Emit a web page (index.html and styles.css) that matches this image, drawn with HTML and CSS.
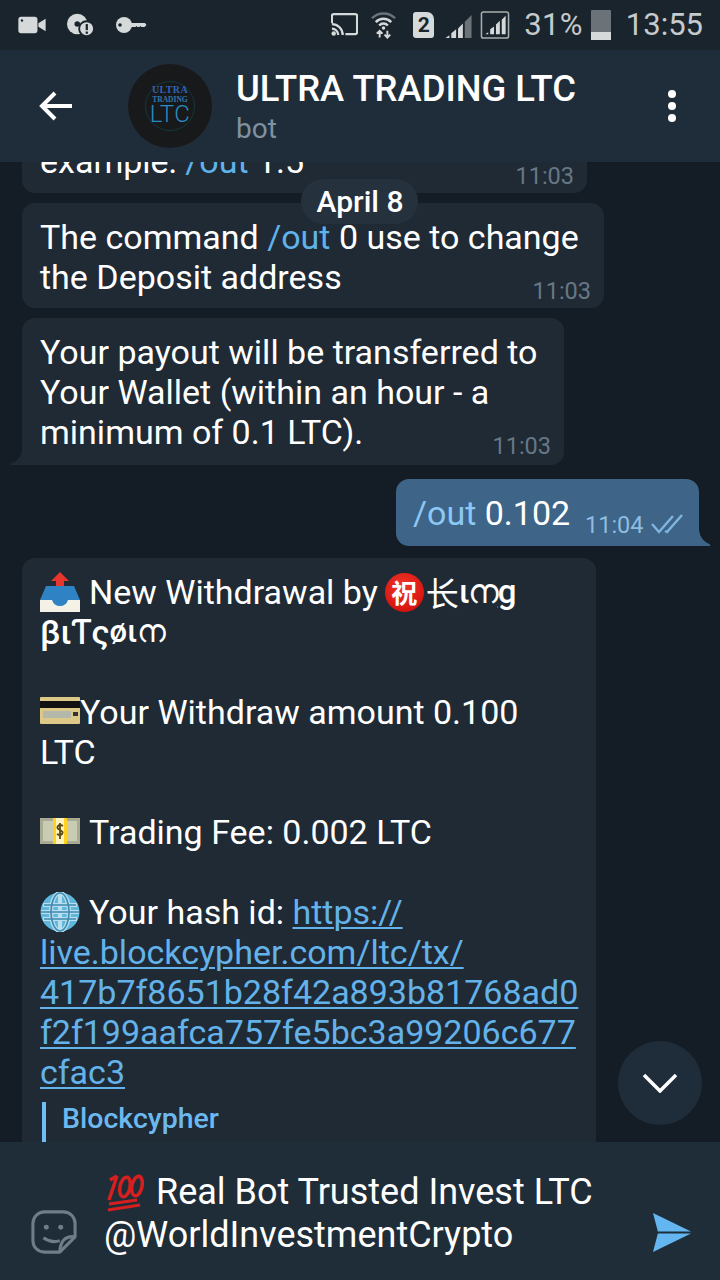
FILE: index.html
```html
<!DOCTYPE html>
<html lang="en">
<head>
<meta charset="utf-8">
<title>ULTRA TRADING LTC</title>
<link rel="stylesheet" href="styles.css">
</head>
<body>
<div class="app">
  <div class="status">
    <div class="status-left">
      <svg class="ic" width="30" height="20" viewBox="0 0 32 22"><rect x="1" y="2" width="21" height="18" rx="3" fill="#d6d9da"/><path d="M23 9l8-5v14l-8-5z" fill="#d6d9da"/><circle cx="5" cy="6" r="1.3" fill="#1a242c"/></svg>
      <svg class="ic" width="28" height="26" viewBox="0 0 30 26"><circle cx="11" cy="12" r="11" fill="#d6d9da"/><circle cx="11" cy="12" r="3" fill="#1a242c"/><circle cx="21" cy="17" r="8" fill="#d6d9da" stroke="#1a242c" stroke-width="2"/><rect x="20" y="12" width="2.4" height="6.5" fill="#1a242c"/><rect x="20" y="20" width="2.4" height="2.4" fill="#1a242c"/></svg>
      <svg class="ic" width="32" height="18" viewBox="0 0 32 18"><circle cx="9" cy="9" r="8" fill="#d6d9da"/><circle cx="5" cy="9" r="1.8" fill="#1a242c"/><path d="M15 7h15l1.5 2-2 2h-3l-1-1-1 1h-2l-1-1-1 1h-5.500z" fill="#d6d9da"/></svg>
    </div>
    <div class="status-right">
      <svg class="ic g13" width="27" height="24" viewBox="0 0 30 26"><rect x="1" y="1" width="28" height="22" rx="2" fill="none" stroke="#d6d9da" stroke-width="2.500"/><rect x="0" y="11" width="16" height="15" fill="#1a242c"/><path d="M1 12a12 12 0 0 1 12 12M1 17a7 7 0 0 1 7 7" fill="none" stroke="#d6d9da" stroke-width="2.500"/><circle cx="3" cy="22.500" r="2.500" fill="#d6d9da"/></svg>
      <svg class="ic g16" width="27" height="28" viewBox="0 0 28 28"><path d="M2 7a17 17 0 0 1 24 0" fill="none" stroke="#6b7378" stroke-width="2.500"/><path d="M6 11a11 11 0 0 1 16 0M9.500 14.500a6 6 0 0 1 9 0" fill="none" stroke="#d6d9da" stroke-width="2.500"/><circle cx="14" cy="17" r="1.800" fill="#d6d9da"/><path d="M10 20v7M7 23l3-3 3 3M18 27v-7M15 24l3 3 3-3" fill="none" stroke="#d6d9da" stroke-width="2"/></svg>
      <span class="sim">2</span>
      <svg class="ic g7" width="28" height="27" viewBox="0 0 28 28"><path d="M0 27l4-3v3z" fill="#d6d9da"/><path d="M6 22l5-4v9H6z" fill="#d6d9da"/><path d="M13 17l5-5v15h-5z" fill="#d6d9da"/><path d="M20 10l7-7v24h-7z" fill="#6b7378"/></svg>
      <svg class="ic g14" width="30" height="29" viewBox="0 0 30 30"><rect x="1" y="1" width="28" height="27" rx="2" fill="none" stroke="#a8adaf" stroke-width="1.600"/><path d="M5 24l3-2v2zM10 24v-5l4-3v8zM16 24v-10l4-4v14zM22 24v-15l4-4v19z" fill="#d6d9da"/></svg>
      <span class="stat-text pct">31%</span>
      <span class="battery"><span class="battery-fill"></span></span>
      <span class="stat-text">13:55</span>
    </div>
  </div>

  <header class="header">
    <svg class="back" width="36" height="32" viewBox="0 0 36 32"><path d="M34 16H4M17 3L4 16l13 13" fill="none" stroke="#fff" stroke-width="4"/></svg>
    <div class="avatar">
      <div class="logo">
        <span class="logo-a">ULTRA</span>
        <span class="logo-b">TRADING</span>
        <span class="logo-c">LTC</span>
      </div>
    </div>
    <div class="titles">
      <div class="title">ULTRA TRADING LTC</div>
      <div class="subtitle">bot</div>
    </div>
    <div class="dots"><i></i><i></i><i></i></div>
  </header>

  <main class="chat">
    <div class="date">April 8</div>
    <div class="scroll">
      <div class="bubble in b1">
        <div class="line">example: <span class="cmd">/out</span> 1.5</div>
        <span class="time t1">11:03</span>
      </div>
      <div class="bubble in b2">
        <div>The command <span class="cmd">/out</span> 0 use to change<br>the Deposit address</div>
        <span class="time t2">11:03</span>
      </div>
      <div class="bubble in tail b3">
        <div>Your payout will be transferred to<br>Your Wallet (within an hour - a<br>minimum of 0.1 LTC).</div>
        <span class="time t3">11:03</span>
        <svg class="tail-in" width="14" height="14" viewBox="0 0 14 14"><path d="M14 0v14H2Q0 14 1 12.500Q10 10 12 0z" fill="#1f2a35"/></svg>
      </div>
      <div class="bubble out">
        <div><span class="cmd-out">/out</span> 0.102</div>
        <span class="time-out">11:04</span>
        <svg class="checks" width="32" height="20" viewBox="0 0 32 20"><path d="M1 10l7 8L22 2M14 17l2 1L31 1" fill="none" stroke="#7fb5e0" stroke-width="2.400"/></svg>
        <svg class="tail-out" width="14" height="16" viewBox="0 0 14 16"><path d="M0 0v16h12Q14 16 13 14.500Q3 10 2 0z" fill="#3e6488"/></svg>
      </div>
      <div class="bubble in b5">
        <div class="row">
          <svg class="emoji" width="40" height="40" viewBox="0 0 40 40"><path d="M20 0l9 9h-5v8h-8V9h-5z" fill="#e8352e"/><path d="M6 14h28l6 14v11H0V28z" fill="#2f83c5"/><path d="M0 28h12q2 6 8 6t8-6h12v12H0z" fill="#f4f1e6"/></svg>
          <span class="e-gap">New Withdrawal by</span><span class="congrats">祝</span><span class="cjk">长</span><span class="fancy squeeze">ιന<span class="ug">g</span></span>
        </div>
        <div class="row fancy">βιƬς<span class="tight">øιന</span></div>
        <div class="row">&nbsp;</div>
        <div class="row">
          <svg class="emoji" width="40" height="30" viewBox="0 0 40 30"><rect y="0" width="40" height="27" rx="1" fill="#dcc887"/><rect y="4" width="40" height="7" fill="#111"/><rect x="3" y="14" width="28" height="7" fill="#b4b8ab"/><rect x="33" y="15" width="5" height="4" fill="#333"/></svg>
          <span>Your Withdraw amount 0.100</span>
        </div>
        <div class="row">LTC</div>
        <div class="row">&nbsp;</div>
        <div class="row">
          <svg class="emoji" width="40" height="28" viewBox="0 0 40 28"><rect width="40" height="26" fill="#a8ab92"/><rect x="3" y="3" width="34" height="20" fill="#c9cbb2"/><rect x="13" y="0" width="14" height="26" fill="#ffd21f"/><rect x="16" y="0" width="8" height="26" fill="#fff3c0"/><path d="M23 8q-3-2-5 0t2 4 2 4-5 0M20 5v16" fill="none" stroke="#5d4a10" stroke-width="1.800"/></svg>
          <span class="e-gap">Trading Fee: 0.002 LTC</span>
        </div>
        <div class="row">&nbsp;</div>
        <div class="row">
          <svg class="emoji" width="40" height="40" viewBox="0 0 40 40"><circle cx="20" cy="20" r="19.500" fill="#5fb8dc"/><g fill="none" stroke="#b9dfef" stroke-width="4"><path d="M3 13h34M1 20h38M3 27h34"/><ellipse cx="20" cy="20" rx="9" ry="19"/><path d="M20 1v38"/></g><g fill="none" stroke="#3f89b0" stroke-width="1.500"><path d="M4 13h32M1 20h38M4 27h32"/><ellipse cx="20" cy="20" rx="9" ry="19"/></g></svg>
          <span class="e-gap">Your hash id: <span class="link">https://</span></span>
        </div>
        <div class="row link">live.blockcypher.com/ltc/tx/</div>
        <div class="row link">417b7f8651b28f42a893b81768ad0</div>
        <div class="row link">f2f199aafca757fe5bc3a99206c677</div>
        <div class="row link">cfac3</div>
        <div class="preview">Blockcypher</div>
      </div>
    </div>
    <div class="fab">
      <svg width="36" height="20" viewBox="0 0 36 20"><path d="M2 2l16 16L34 2" fill="none" stroke="#fff" stroke-width="3.500"/></svg>
    </div>
  </main>

  <footer class="composer">
    <svg class="sticker" width="46" height="46" viewBox="0 0 48 46"><path d="M14 2h20a12 12 0 0 1 12 12v14L30 44H14A12 12 0 0 1 2 32V14A12 12 0 0 1 14 2z" fill="none" stroke="#6f7d89" stroke-width="3.200" stroke-linejoin="round"/><circle cx="16" cy="18" r="2.600" fill="#6f7d89"/><circle cx="31" cy="18" r="2.600" fill="#6f7d89"/><path d="M13 29q8 6 17 3M46 28q-15-2-16 16" fill="none" stroke="#6f7d89" stroke-width="3.200"/></svg>
    <div class="input">
      <div class="input-line">
        <svg class="emoji hundred" width="38" height="40" viewBox="0 0 38 40"><g fill="none" stroke="#d5201f" stroke-width="3.500"><path d="M11 3L3 27M4 7l7-4"/><ellipse cx="19" cy="14" rx="5" ry="10" transform="rotate(12 19 14)"/><ellipse cx="31" cy="13" rx="5" ry="10" transform="rotate(12 31 13)"/></g><path d="M3 31l28-4M2 37l32-5" fill="none" stroke="#d5201f" stroke-width="3"/></svg>
        <span class="real">Real Bot Trusted Invest LTC</span>
      </div>
      <div class="input-line">@WorldInvestmentCrypto</div>
    </div>
    <svg class="send" width="41" height="41" viewBox="0 0 42 42"><path d="M1 1L40 20H6zM1 41L40 22H6z" fill="#63b6ef"/></svg>
  </footer>
</div>
</body>
</html>
```

FILE: styles.css
```css
* { box-sizing: border-box; }
html, body { margin: 0; padding: 0; background: #141d25; }
.app {
  width: 720px;
  height: 1280px;
  display: flex;
  flex-direction: column;
  overflow: hidden;
  font-family: Roboto, "Noto Sans", "Noto Sans CJK SC", sans-serif;
  color: #fff;
}
.status {
  height: 50px;
  flex: none;
  background: #1a242c;
  display: flex;
  justify-content: space-between;
  align-items: center;
  padding: 0 17px 0 17px;
}
.status-left, .status-right { display: flex; align-items: center; }
.status-left { gap: 20px; }
.ic { display: block; flex: none; }
.g13 { margin-right: 12px; }
.g16 { margin-right: 16px; }
.g7 { margin-right: 7px; }
.g14 { margin-right: 14px; }
.sim {
  width: 21px;
  height: 26px;
  background: #d6d9da;
  color: #1a242c;
  font-size: 21px;
  font-weight: 700;
  line-height: 26px;
  text-align: center;
  border-radius: 3px 7px 3px 3px;
  margin-right: 11px;
}
.stat-text { font-size: 31px; color: #c5cacc; line-height: 36px; }
.pct { margin-right: 8px; letter-spacing: .3px; }
.battery {
  width: 20px;
  height: 30px;
  background: #6b7378;
  display: flex;
  align-items: flex-end;
  margin-right: 15px;
  border-radius: 1px;
}
.battery-fill { width: 100%; height: 8px; background: #d6d9da; }

.header {
  height: 112px;
  flex: none;
  background: #1f2d3a;
  display: flex;
  align-items: center;
  padding: 0 38px;
  position: relative;
  z-index: 3;
}
.back { flex: none; }
.avatar {
  width: 84px;
  height: 84px;
  flex: none;
  margin-left: 54px;
  border-radius: 50%;
  background: #18191b;
  display: flex;
  align-items: center;
  justify-content: center;
}
.logo {
  width: 50px;
  height: 50px;
  border: 1px solid #12383d;
  border-radius: 50%;
  display: flex;
  flex-direction: column;
  align-items: center;
  padding-top: 3px;
}
.logo-a { font: 700 10px/10px "Liberation Serif", serif; color: #2f64b8; letter-spacing: .4px; white-space: nowrap; }
.logo-b { font: 700 7.500px/9px "Liberation Serif", serif; color: #3078ac; white-space: nowrap; }
.logo-c { font: 300 24px/21px Roboto, sans-serif; color: #2a8cc0; letter-spacing: .5px; white-space: nowrap; }
.titles { margin-left: 24px; flex: 1; padding-top: 2px; }
.title { font-size: 36.400px; font-weight: 500; line-height: 42px; white-space: nowrap; }
.subtitle { font-size: 28px; line-height: 36px; color: #7f919f; margin-top: 1px; }
.dots { display: flex; flex-direction: column; gap: 4px; margin-right: 6px; }
.dots i { width: 8px; height: 8px; border-radius: 50%; background: #fff; display: block; }

.chat {
  flex: 1;
  min-height: 0;
  position: relative;
  overflow: hidden;
  background: #141d25;
}
.scroll { display: flex; flex-direction: column; align-items: flex-start; padding-left: 22px; }
.date {
  position: absolute;
  top: 17px;
  left: 301px;
  width: 117px;
  height: 45px;
  border-radius: 23px;
  background: #25323d;
  font-size: 30px;
  font-weight: 500;
  line-height: 46px;
  text-align: center;
  padding-left: 1px;
  z-index: 2;
}
.bubble {
  position: relative;
  background: #1f2a35;
  border-radius: 13px;
  font-size: 34px;
  line-height: 40px;
  padding: 14px 18px 11px;
  white-space: nowrap;
  flex: none;
}
.cmd { color: #5fb2ea; }
.b1 { width: 565px; height: 80px; margin-top: -49px; margin-bottom: 10px; }
.line { padding-top: 14px; }
.b2 { width: 582px; height: 105px; margin-bottom: 10px; }
.b3 { width: 542px; height: 147px; border-bottom-left-radius: 0; margin-bottom: 14px; }
.time {
  position: absolute;
  right: 13px;
  bottom: 2px;
  font-size: 23.500px;
  line-height: 30px;
  color: #677785;
}
.t3 { bottom: 4px; }
.tail-in { position: absolute; left: -12px; bottom: 0; }
.out {
  align-self: flex-end;
  width: 303px;
  height: 67px;
  margin-right: 21px;
  margin-bottom: 12px;
  background: #3e6488;
  padding: 14px 17px 0;
  border-bottom-right-radius: 0;
}
.cmd-out { color: #8cc8f5; }
.time-out {
  position: absolute;
  left: 189px;
  bottom: 6px;
  font-size: 23.500px;
  line-height: 30px;
  color: #8fbcdf;
}
.checks { position: absolute; right: 16px; bottom: 12px; }
.tail-out { position: absolute; right: -12px; bottom: 0; }
.b5 { width: 574px; padding: 14px 18px 20px; }
.row { display: flex; align-items: center; height: 40px; }
.row.link { display: block; }
.emoji { display: block; flex: none; }
.e-gap { margin-left: 9px; }
.link { color: #63b3ea; text-decoration: underline; text-decoration-thickness: 2px; text-underline-offset: 3px; }
.congrats {
  width: 39px;
  height: 39px;
  margin-left: 7px;
  border-radius: 50%;
  background: radial-gradient(circle at 45% 35%, #f0382c, #d8150f 70%, #b80f0b);
  color: #fff;
  font: 700 26px/38px "Noto Sans CJK SC", sans-serif;
  text-align: center;
  flex: none;
}
.cjk { font-family: "Noto Sans CJK SC", sans-serif; font-size: 33px; margin-left: 2px; }
.fancy { font-weight: 500; }
.squeeze { letter-spacing: -1.500px; font-size: 33px; }
.ug { text-decoration: underline; text-decoration-thickness: 2px; text-underline-offset: 3px; }
.tight { font-size: 31px; }
.preview {
  border-left: 4px solid #6fbdf5;
  margin: 10px 0 0 2px;
  padding-left: 16px;
  height: 40px;
  font-size: 28.500px;
  font-weight: 500;
  line-height: 33px;
  color: #6cb9f0;
}
.fab {
  position: absolute;
  right: 18px;
  top: 879px;
  width: 84px;
  height: 84px;
  border-radius: 50%;
  background: #1f2d3a;
  display: flex;
  align-items: center;
  justify-content: center;
  z-index: 2;
}

.composer {
  height: 138px;
  flex: none;
  background: #1f2d39;
  display: flex;
  align-items: center;
  padding: 0 27px 0 31px;
  position: relative;
  z-index: 3;
}
.sticker { flex: none; margin-top: 42px; }
.input { margin-left: 27px; flex: 1; font-size: 36px; line-height: 43px; margin-top: 6px; white-space: nowrap; }
.input-line { display: flex; align-items: center; height: 43px; }
.hundred { margin-left: 2px; }
.real { margin-left: 12px; }
.send { flex: none; margin-top: 42px; }
```
